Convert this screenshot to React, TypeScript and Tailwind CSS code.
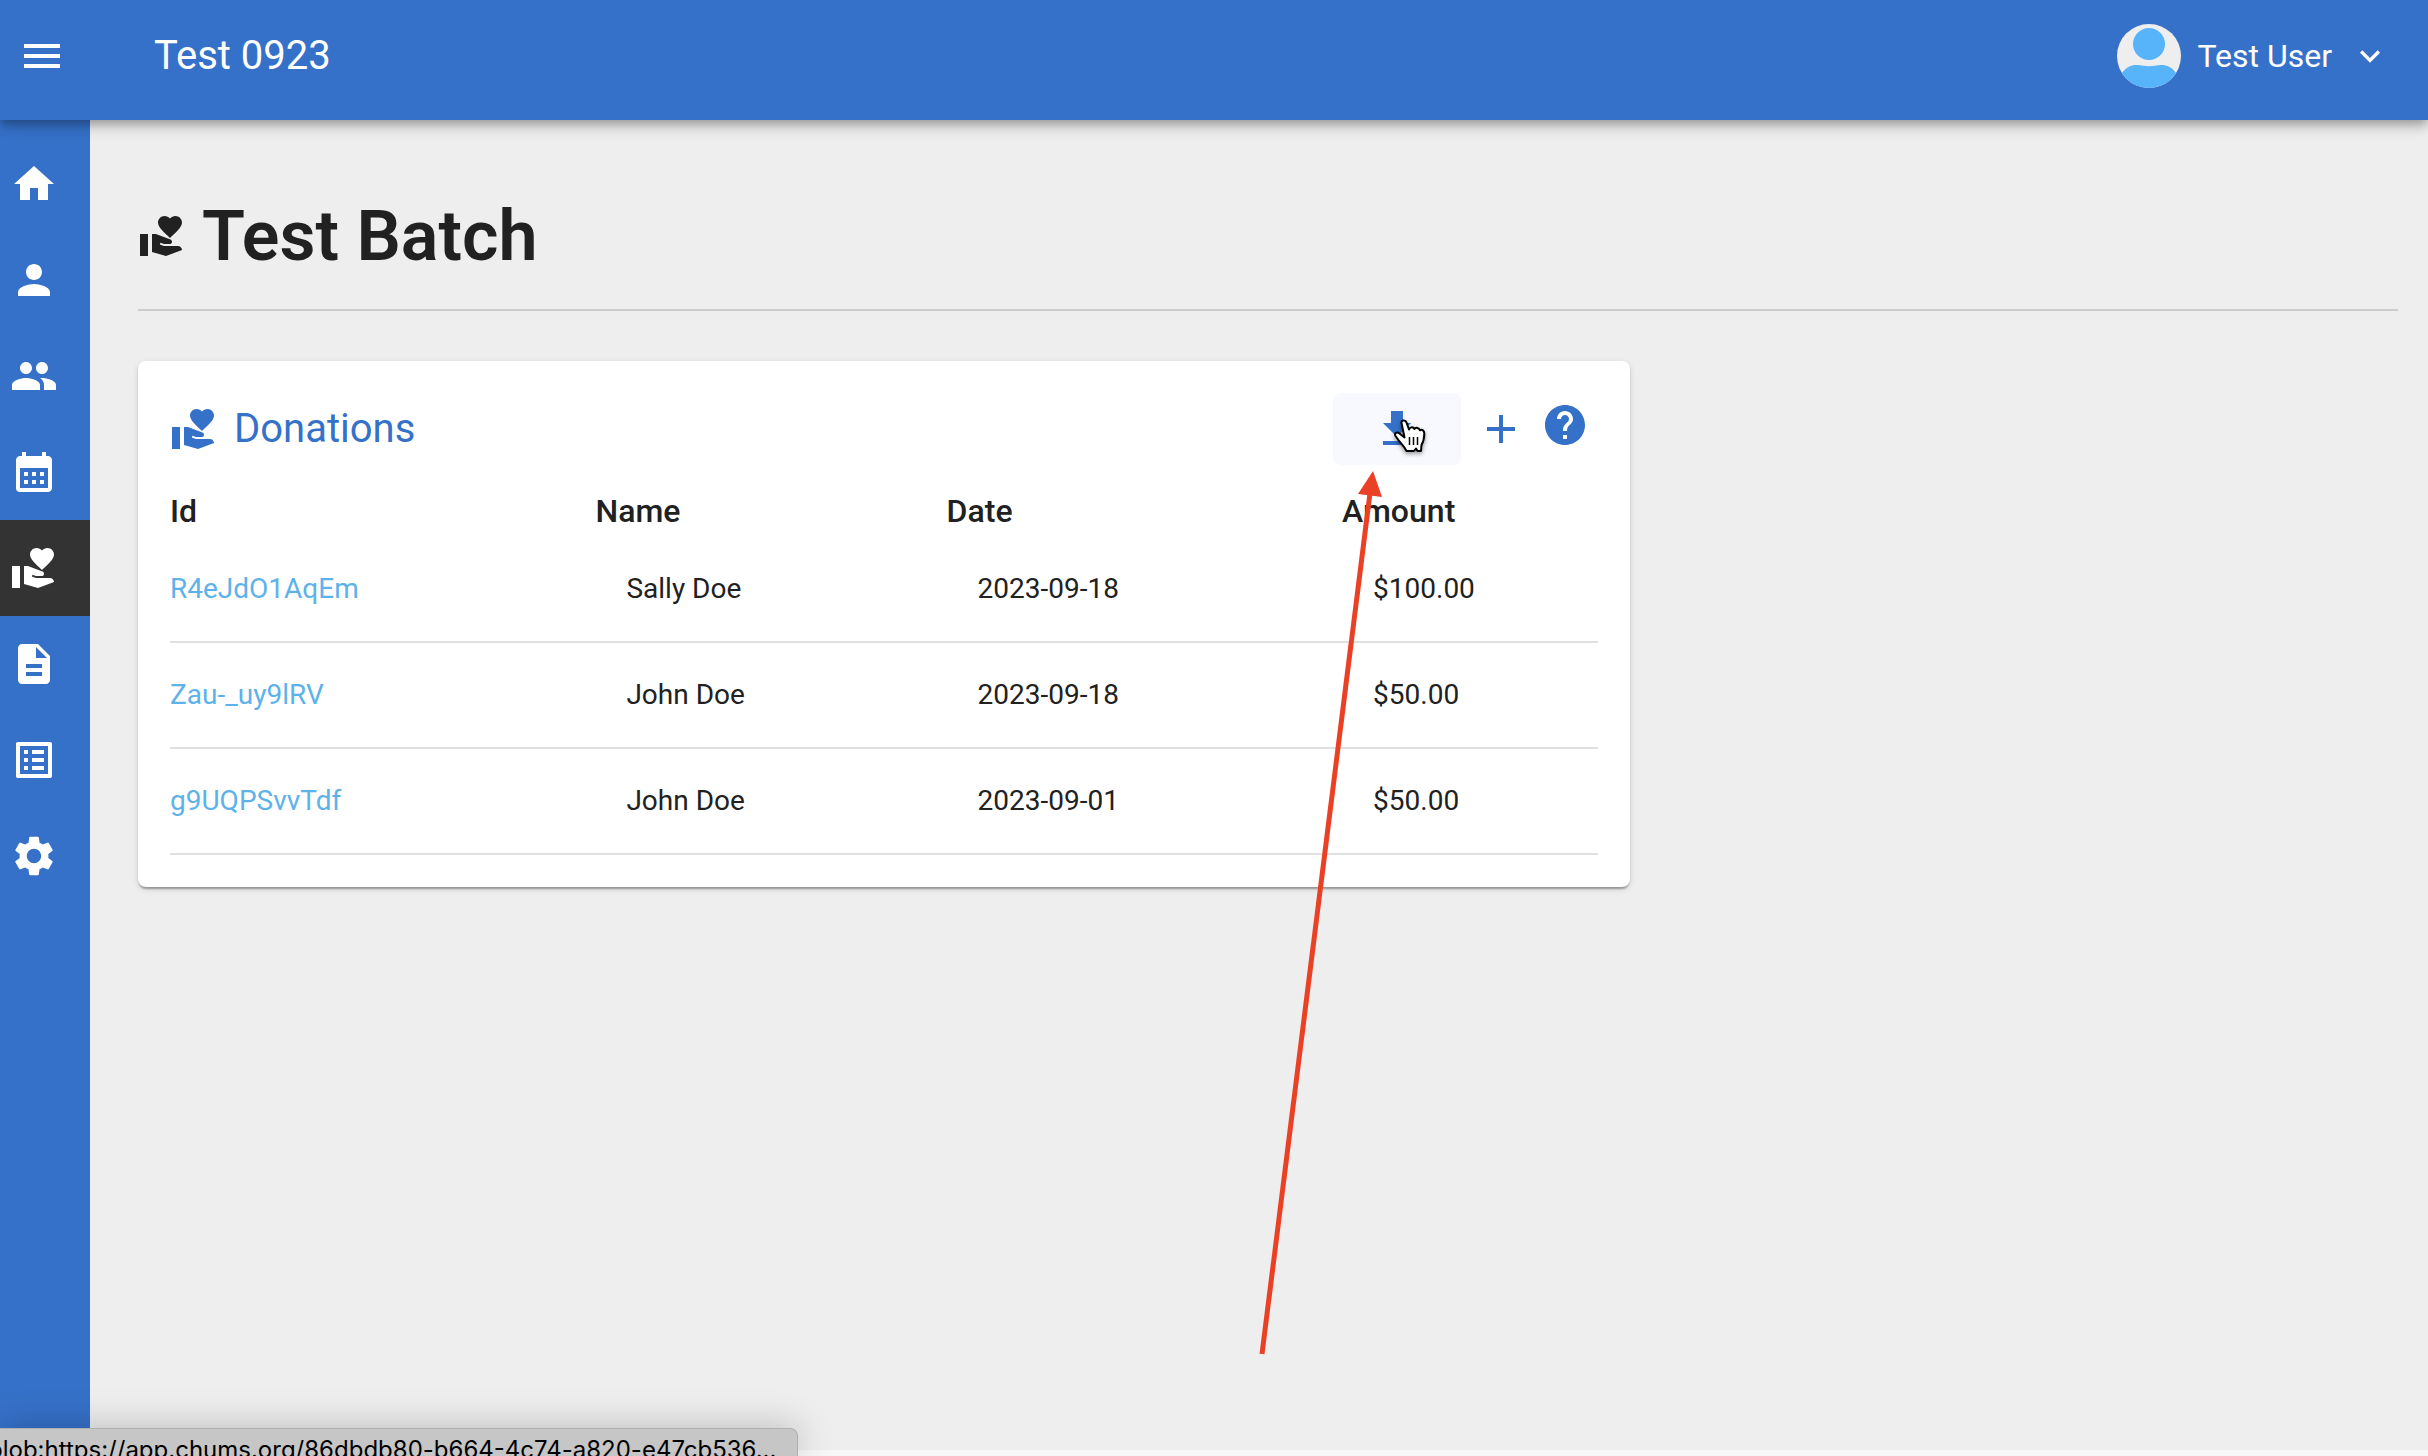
import type { ComponentType } from "react";
import {
  MdMenu,
  MdHome,
  MdPerson,
  MdPeople,
  MdCalendarMonth,
  MdVolunteerActivism,
  MdDescription,
  MdListAlt,
  MdSettings,
  MdExpandMore,
  MdAdd,
  MdHelp,
} from "react-icons/md";

type NavItem = { label: string; Icon: ComponentType<{ className?: string }>; active?: boolean };

const navItems: NavItem[] = [
  { label: "Home", Icon: MdHome },
  { label: "People", Icon: MdPerson },
  { label: "Groups", Icon: MdPeople },
  { label: "Plans", Icon: MdCalendarMonth },
  { label: "Donations", Icon: MdVolunteerActivism, active: true },
  { label: "Forms", Icon: MdDescription },
  { label: "Tasks", Icon: MdListAlt },
  { label: "Settings", Icon: MdSettings },
];

const donations = [
  { id: "R4eJdO1AqEm", name: "Sally Doe", date: "2023-09-18", amount: "$100.00" },
  { id: "Zau-_uy9lRV", name: "John Doe", date: "2023-09-18", amount: "$50.00" },
  { id: "g9UQPSvvTdf", name: "John Doe", date: "2023-09-01", amount: "$50.00" },
];

function Avatar() {
  return (
    <svg viewBox="0 0 64 64" className="size-16 rounded-full" aria-hidden="true">
      <rect width="64" height="64" fill="#eeeeee" />
      <circle cx="32" cy="20" r="16" fill="#57b3fa" />
      <path d="M5 49C9 43 15 40.500 21 41C28 42.500 36 42.500 43 41C49 40.500 55 43 59 49V64H5Z" fill="#57b3fa" />
    </svg>
  );
}

function Header() {
  return (
    <header className="relative z-10 flex h-[120px] shrink-0 items-start justify-between bg-[#3671c9] text-white shadow-[0_4px_8px_-2px_rgba(0,0,0,0.2),0_8px_10px_0_rgba(0,0,0,0.14),0_2px_20px_0_rgba(0,0,0,0.12)]">
      <div className="flex h-28 items-center pl-[18px]">
        <button type="button" aria-label="Open menu">
          <MdMenu className="size-12" />
        </button>
        <p className="pl-[88px] text-[40px] leading-[64px]">Test 0923</p>
      </div>
      <button type="button" className="mr-[38px] flex h-28 items-center">
        <Avatar />
        <span className="pl-4 text-[32px]">Test User</span>
        <MdExpandMore className="ml-[18px] size-10" />
      </button>
    </header>
  );
}

function Sidebar() {
  return (
    <nav aria-label="Main" className="flex w-[90px] shrink-0 flex-col bg-[#3671c9] pt-4 text-white">
      {navItems.map(({ label, Icon, active }) => (
        <a
          key={label}
          href="#"
          aria-label={label}
          className={active ? "flex h-24 items-center bg-[#333333] pl-[10px]" : "flex h-24 items-center pl-[10px]"}
        >
          <Icon className="size-12" />
        </a>
      ))}
    </nav>
  );
}

function PointerCursor() {
  return (
    <svg viewBox="0 0 32 36" className="absolute top-[26px] left-[61px] h-9 w-8 overflow-visible drop-shadow-[0_2px_2px_rgba(0,0,0,0.4)]" aria-hidden="true">
      <path
        d="M7.500 4C7 1 11.500 .5 12.500 3.500L15 10.500C15.500 8 19 7.500 20.500 10C22 8 25 8.800 25.800 11.300C28 10 30.500 11.500 30.300 15C30.200 19 30 22 27.500 26L27 32H23.500L22 29.500L20 32H12.500C10.500 28 8 25.500 5.500 22.500L1.500 17C0 14 3 12.500 5.500 14.500L10.500 18.500Z"
        fill="white"
        stroke="black"
        strokeWidth="2"
        strokeLinejoin="round"
      />
      <path d="M15.500 18V26M19.500 18V26M23.500 18V26" stroke="black" strokeWidth="1.500" />
    </svg>
  );
}

function Arrow() {
  return (
    <svg viewBox="0 0 120 886" className="pointer-events-none absolute top-[110px] left-[1120px] h-[886px] w-[120px] overflow-visible" aria-hidden="true">
      <path d="M4 883L112 22" stroke="#ea4025" strokeWidth="5" />
      <path d="M115 0L124 26L100 23Z" fill="#ea4025" />
    </svg>
  );
}

function DonationsCard() {
  return (
    <section className="relative mt-[50px] w-[66%] rounded-lg bg-white p-8 shadow-[0_4px_2px_-2px_rgba(0,0,0,0.2),0_2px_2px_0_rgba(0,0,0,0.14),0_2px_6px_0_rgba(0,0,0,0.12)]">
      <div className="flex h-[94px] items-start justify-between text-[#3671c9]">
        <h2 className="flex h-[72px] items-center text-[40px]">
          <MdVolunteerActivism className="size-12" />
          <span className="pl-4">Donations</span>
        </h2>
        <div className="flex items-start pr-[9px]">
          <button type="button" aria-label="Download" className="relative flex h-[72px] w-32 items-center justify-center rounded-lg bg-[#f7f9fe]">
            <svg viewBox="0 0 24 24" className="size-12" fill="currentColor" aria-hidden="true">
              <path d="M19 9h-4V3H9v6H5l7 7 7-7zM5 18v2h14v-2H5z" />
            </svg>
            <PointerCursor />
          </button>
          <button type="button" aria-label="Add donation" className="ml-4 flex h-[72px] items-center">
            <MdAdd className="size-12" />
          </button>
          <a href="#" aria-label="Help" className="mt-2 ml-4">
            <MdHelp className="size-12" />
          </a>
        </div>
      </div>
      <table className="w-full table-fixed border-collapse text-left">
        <colgroup>
          <col className="w-[29.8%]" />
          <col className="w-[24.6%]" />
          <col className="w-[27.7%]" />
          <col />
        </colgroup>
        <thead>
          <tr className="h-[49px] align-top text-[32px] leading-[48px]">
            <th className="font-medium">Id</th>
            <th className="font-medium">Name</th>
            <th className="font-medium">Date</th>
            <th className="font-medium">Amount</th>
          </tr>
        </thead>
        <tbody>
          {donations.map((d) => (
            <tr key={d.id} className="h-[106px] border-b-2 border-[#e0e0e0] text-[28px] leading-10">
              <td>
                <a href="#" className="text-[#5db2ea]">{d.id}</a>
              </td>
              <td className="pl-[31px]">{d.name}</td>
              <td className="pl-[31px]">{d.date}</td>
              <td className="pl-[31px]">{d.amount}</td>
            </tr>
          ))}
        </tbody>
      </table>
      <Arrow />
    </section>
  );
}

export default function App() {
  return (
    <div className="relative flex h-screen flex-col overflow-hidden bg-[#eeeeee] font-[Roboto,sans-serif] text-[#212121]">
      <Header />
      <div className="flex grow">
        <Sidebar />
        <main className="grow pr-[30px] pl-12">
          <div className="flex h-[191px] items-center border-b-2 border-[#cccccc] pt-[43px]">
            <h1 className="flex items-center text-[70px] font-semibold">
              <MdVolunteerActivism className="size-12" />
              <span className="pl-4">Test Batch</span>
            </h1>
          </div>
          <DonationsCard />
        </main>
      </div>
      <div className="absolute bottom-0 left-0 h-[6px] w-full bg-[#f7f7f7]" />
      <div className="absolute bottom-0 left-0 z-20 h-7 w-[798px] overflow-hidden rounded-tr-lg border-t border-r border-[#b0b0b0] bg-[#c6c6c6] shadow-[0_0_36px_rgba(0,0,0,0.25)]">
        <p className="-ml-3 font-[Inter,sans-serif] text-[24px] leading-[42px] whitespace-nowrap text-black">
          blob:https://app.chums.org/86dbdb80-b664-4c74-a820-e47cb536...
        </p>
      </div>
    </div>
  );
}
